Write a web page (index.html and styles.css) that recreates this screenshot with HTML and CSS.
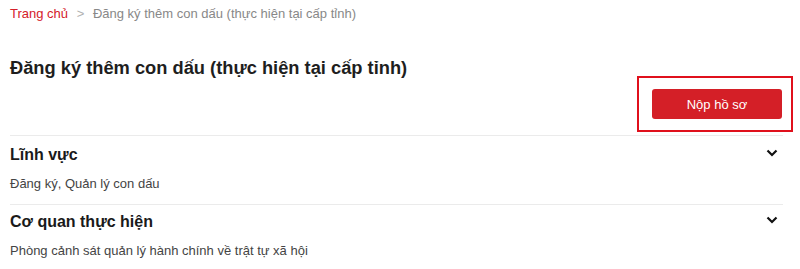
FILE: index.html
```html
<!DOCTYPE html>
<html lang="vi">
<head>
    <meta charset="UTF-8">
    <meta name="viewport" content="width=device-width, initial-scale=1.0">
    <title>Đăng ký thêm con dấu</title>
    <link rel="stylesheet" href="styles.css">
</head>
<body>
    <div class="page">
        <div class="breadcrumb">
            <a href="#" class="crumb-home">Trang chủ</a>
            <span class="crumb-sep">&gt;</span>
            <span class="crumb-current">Đăng ký thêm con dấu (thực hiện tại cấp tỉnh)</span>
        </div>
        <h1 class="proc-title">Đăng ký thêm con dấu (thực hiện tại cấp tỉnh)</h1>
        <div class="action-row">
            <div class="highlight">
                <button class="submit-btn">Nộp hồ sơ</button>
            </div>
        </div>
        <div class="info-section">
            <div class="info-head">
                <h2>Lĩnh vực</h2>
                <svg class="chevron" width="12" height="8" viewBox="0 0 12 8"><path d="M1.5 1.5 L6 6 L10.5 1.5" fill="none" stroke="#111" stroke-width="2.2"/></svg>
            </div>
            <p class="info-body">Đăng ký, Quản lý con dấu</p>
        </div>
        <div class="info-section">
            <div class="info-head">
                <h2>Cơ quan thực hiện</h2>
                <svg class="chevron" width="12" height="8" viewBox="0 0 12 8"><path d="M1.5 1.5 L6 6 L10.5 1.5" fill="none" stroke="#111" stroke-width="2.2"/></svg>
            </div>
            <p class="info-body">Phòng cảnh sát quản lý hành chính về trật tự xã hội</p>
        </div>
    </div>
</body>
</html>
```

FILE: styles.css
```css
* {
    margin: 0;
    padding: 0;
    box-sizing: border-box;
}
body {
    font-family: "Liberation Sans", Arial, sans-serif;
    background: #fff;
    color: #222;
}
.page {
    width: 783px;
    padding-left: 10px;
}
.breadcrumb {
    padding-top: 4px;
    font-size: 13px;
    line-height: 20px;
    color: #888;
}
.crumb-home {
    color: #d4202a;
    text-decoration: none;
}
.crumb-sep {
    margin: 0 5px;
    color: #b0b0b0;
}
.proc-title {
    margin-top: 32px;
    font-size: 18.3px;
    line-height: 24px;
    font-weight: bold;
    color: #1e1e1e;
}
.action-row {
    display: flex;
    justify-content: flex-end;
    margin-top: -4px;
    margin-right: -10px;
}
.highlight {
    border: 2px solid #e0101c;
    padding: 11px 9px 11px 13px;
}
.submit-btn {
    width: 130px;
    height: 30px;
    border: none;
    border-radius: 3px;
    background: #d41f27;
    color: #fff;
    font-family: inherit;
    font-size: 13px;
    cursor: pointer;
}
.info-section {
    border-top: 1px solid #ebebeb;
    padding: 9px 0 10px;
}
.action-row + .info-section {
    margin-top: 3px;
}
.info-section + .info-section {
    padding-top: 7px;
}
.info-head {
    display: flex;
    justify-content: space-between;
    align-items: center;
}
.info-head h2 {
    font-size: 16px;
    line-height: 20px;
    font-weight: bold;
    color: #1a1a1a;
}
.chevron {
    margin-right: 5px;
    margin-top: -4px;
}
.info-body {
    margin-top: 9px;
    font-size: 13px;
    line-height: 20px;
    color: #444;
}
```
